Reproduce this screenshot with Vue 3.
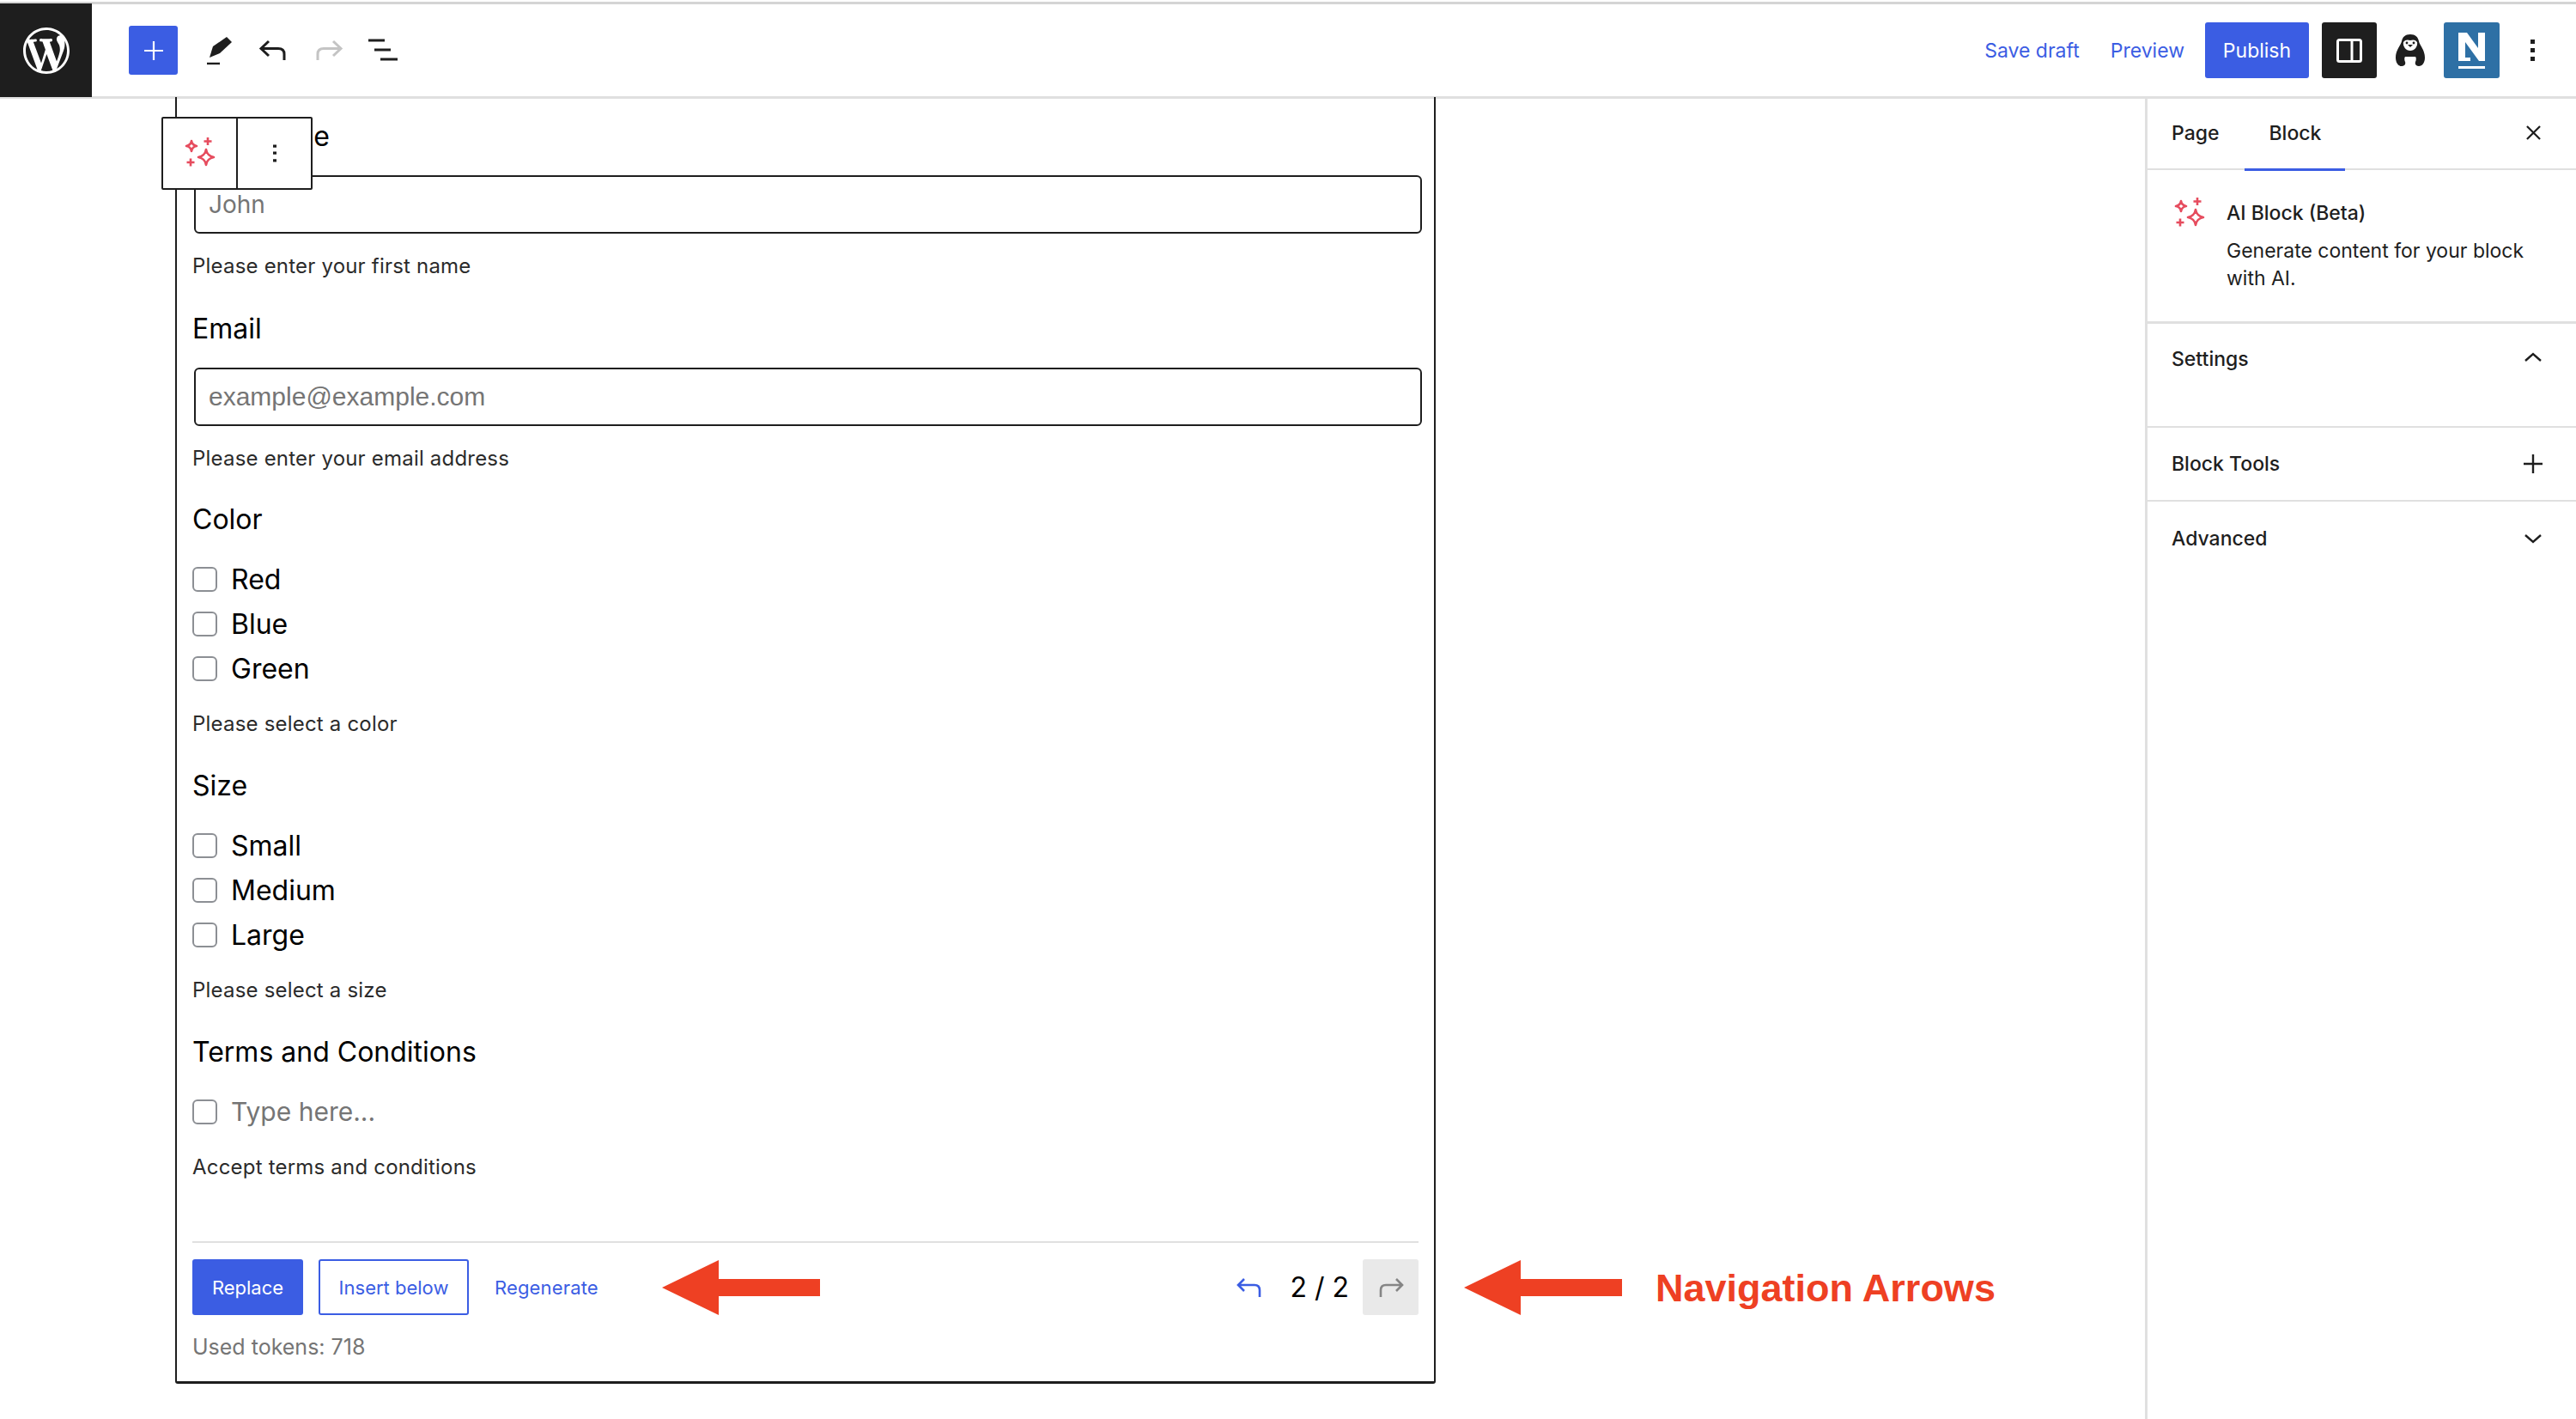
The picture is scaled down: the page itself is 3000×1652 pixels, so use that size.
<template>
  <div class="editor">
    <header class="topbar">
      <div class="wp-logo">
        <svg viewBox="0 0 20 20" width="54" height="54"><path fill="#fff" d="M20 10c0-5.51-4.49-10-10-10C4.48 0 0 4.49 0 10c0 5.52 4.48 10 10 10 5.51 0 10-4.48 10-10zM7.78 15.37L4.37 6.22c.55-.02 1.17-.08 1.17-.08.5-.06.44-1.13-.06-1.11 0 0-1.45.11-2.37.11-.18 0-.37 0-.58-.01C4.12 2.69 6.87 1.11 10 1.11c2.33 0 4.45.87 6.05 2.34-.68-.11-1.65.39-1.65 1.58 0 .74.45 1.36.9 2.1.35.61.55 1.36.55 2.46 0 1.49-1.4 5-1.4 5l-3.03-8.37c.54-.02.82-.17.82-.17.5-.05.44-1.25-.06-1.22 0 0-1.44.12-2.38.12-.87 0-2.33-.12-2.33-.12-.5-.03-.56 1.2-.06 1.22l.92.08 1.26 3.41zM17.41 10c.24-.64.74-1.87.43-4.25.7 1.29 1.05 2.71 1.05 4.25 0 3.29-1.73 6.24-4.4 7.78.97-2.59 1.94-5.2 2.92-7.78zM6.1 18.09C3.12 16.65 1.11 13.53 1.11 10c0-1.3.23-2.48.72-3.59C3.25 10.3 4.67 14.2 6.1 18.09zm4.03-6.63l2.58 6.98c-.86.29-1.76.45-2.71.45-.79 0-1.57-.11-2.29-.33.81-2.38 1.62-4.74 2.42-7.1z"/></svg>
      </div>
      <div class="tools">
        <button class="add-btn">
          <svg viewBox="0 0 24 24" width="24" height="24"><path d="M12 1v22M1 12h22" stroke="#fff" stroke-width="2.2" fill="none"/></svg>
        </button>
        <svg class="tool" viewBox="0 0 36 48" width="36" height="48"><path d="M9 32l4-13L29 8l6 6-14 13z" fill="#1e1e1e"/><path d="M6 39h15" stroke="#1e1e1e" stroke-width="2.4"/></svg>
        <svg class="tool tool-undo" viewBox="0 0 36 36" width="36" height="36"><path d="M12 7L3 15.500l9 8.500M3 15.500h20c5 0 7 2.500 7 6.500v7" fill="none" stroke="#1e1e1e" stroke-width="3"/></svg>
        <svg class="tool tool-redo" viewBox="0 0 36 36" width="36" height="36"><path d="M24 7l9 8.500-9 8.500M33 15.500H13c-5 0-7 2.500-7 6.500v7" fill="none" stroke="#c4c4c4" stroke-width="3"/></svg>
        <svg class="tool tool-list" viewBox="0 0 36 36" width="36" height="36"><path d="M0 6h19M7 17h19M14 28h20" fill="none" stroke="#1e1e1e" stroke-width="3"/></svg>
      </div>
      <div class="actions">
        <a class="link save">Save draft</a>
        <a class="link preview">Preview</a>
        <button class="publish">Publish</button>
        <button class="panel-btn">
          <svg viewBox="0 0 30 28" width="30" height="28"><rect x="1.500" y="1.500" width="27" height="25" rx="2" fill="none" stroke="#fff" stroke-width="3"/><path d="M18 2v24" stroke="#fff" stroke-width="3"/></svg>
        </button>
        <svg class="penguin" viewBox="0 0 34 38" width="34" height="38">
          <path d="M17 0c6 0 9 3 10 8 1 5 7 10 7 19 0 6-3 10-7 10-3 0-5-2-4-5 1-2 1-5 0-6h-12c-1 1-1 4 0 6 1 3-1 5-4 5-4 0-7-4-7-10 0-9 6-14 7-19 1-5 4-8 10-8z" fill="#1e1e1e"/>
          <path d="M9 9c2-3 5-3 8-2 3-1 6-1 8 2 1 5-3 10-8 10-5 0-9-5-8-10z" fill="#fff"/>
          <circle cx="13" cy="10" r="1.400" fill="#1e1e1e"/><circle cx="21" cy="10" r="1.400" fill="#1e1e1e"/><path d="M14 12h6l-3 3z" fill="#1e1e1e"/>
        </svg>
        <div class="n-logo">
          <svg viewBox="0 0 65 65" width="65" height="65"><path d="M17 12h10l13 18V12h8v33h-7L25 23v18h6v4H17z" fill="#fff"/><path d="M17 51h31v3H17z" fill="#fff"/></svg>
        </div>
        <svg class="kebab" viewBox="0 0 5 25" width="5" height="25"><path d="M0 0h5v5H0zM0 10h5v5H0zM0 20h5v5H0z" fill="#1e1e1e"/></svg>
      </div>
    </header>

    <div class="workspace">
      <main class="canvas">
        <div class="block-toolbar">
          <div class="bt-cell">
            <svg viewBox="0 0 38 38" width="38" height="38"><use href="#sparkle" /></svg>
          </div>
          <div class="bt-cell bt-more">
            <svg viewBox="0 0 5 25" width="4" height="25"><path d="M0 0h5v4H0zM0 10h5v4H0zM0 21h5v4H0z" fill="#1e1e1e"/></svg>
          </div>
        </div>

        <section class="form-block">
          <div v-for="field in fields" :key="field.label" class="field">
            <div class="field-label">{{ field.label }}</div>
            <input v-if="field.placeholder" class="text-input" :class="{ 'input-em': field.type === 'email' }" :type="field.type" :placeholder="field.placeholder" />
            <div v-else class="options">
              <label v-for="opt in field.options" :key="opt" class="option" :class="{ muted: field.muted }">
                <input type="checkbox" class="check" />
                <span>{{ opt }}</span>
              </label>
            </div>
            <div class="helper">{{ field.help }}</div>
          </div>

          <div class="result-bar">
            <button class="btn-primary">Replace</button>
            <button class="btn-outline">Insert below</button>
            <a class="btn-link">Regenerate</a>
            <div class="pager">
              <svg viewBox="0 0 30 24" width="30" height="24"><path d="M9 2L2 9l7 7M2 9h19c4 0 6 2 6 6v8" fill="none" stroke="#3b5de3" stroke-width="2.600"/></svg>
              <span class="count">2 / 2</span>
              <button class="next">
                <svg viewBox="0 0 30 24" width="30" height="24"><path d="M21 2l7 7-7 7M28 9H9c-4 0-6 2-6 6v8" fill="none" stroke="#858585" stroke-width="2.600"/></svg>
              </button>
            </div>
          </div>
          <div class="tokens">Used tokens: 718</div>
        </section>

        <svg class="arrow arrow-a" viewBox="0 0 184 64" width="184" height="64"><path d="M0 32L66 0v22h118v20H66v22z" fill="#ee4023"/></svg>
        <svg class="arrow arrow-b" viewBox="0 0 184 64" width="184" height="64"><path d="M0 32L66 0v22h118v20H66v22z" fill="#ee4023"/></svg>
        <div class="arrow-note">Navigation Arrows</div>
      </main>

      <aside class="sidebar">
        <div class="tabs">
          <span class="tab">Page</span>
          <span class="tab tab-on">Block</span>
          <svg class="close" viewBox="0 0 18 18" width="17" height="17"><path d="M1 1l16 16M17 1L1 17" stroke="#1e1e1e" stroke-width="2.400" fill="none"/></svg>
        </div>
        <div class="block-info">
          <svg class="info-icon" viewBox="0 0 38 38" width="38" height="38">
            <defs>
              <g id="sparkle" fill="none" stroke="#e64c5e" stroke-width="2.600" stroke-linejoin="round">
                <path d="M9 4c.5 3 3 5.500 6 6-3 .5-5.500 3-6 6-.5-3-3-5.500-6-6 3-.5 5.500-3 6-6z"/>
                <path d="M26 14c.7 4.700 4.300 8.300 9 9-4.700.7-8.300 4.300-9 9-.7-4.700-4.300-8.300-9-9 4.700-.7 8.300-4.300 9-9z"/>
                <path d="M28 0v9M23.500 4.500h9M8 24.500v9M3.500 29h9"/>
              </g>
            </defs>
            <use href="#sparkle" />
          </svg>
          <div>
            <div class="info-title">AI Block (Beta)</div>
            <p class="info-text">Generate content for your block with AI.</p>
          </div>
        </div>
        <div v-for="panel in panels" :key="panel.title" class="panel" :class="panel.cls">
          <span>{{ panel.title }}</span>
          <svg viewBox="0 0 24 24" width="24" height="24"><path :d="panel.icon" fill="none" stroke="#1e1e1e" stroke-width="2.400"/></svg>
        </div>
      </aside>
    </div>
  </div>
</template>

<script setup>
const fields = [
  { label: 'First Name', type: 'text', placeholder: 'John', help: 'Please enter your first name' },
  { label: 'Email', type: 'email', placeholder: 'example@example.com', help: 'Please enter your email address' },
  { label: 'Color', options: ['Red', 'Blue', 'Green'], help: 'Please select a color' },
  { label: 'Size', options: ['Small', 'Medium', 'Large'], help: 'Please select a size' },
  { label: 'Terms and Conditions', options: ['Type here...'], muted: true, help: 'Accept terms and conditions' }
]

const panels = [
  { title: 'Settings', icon: 'M3 16l9-8 9 8', cls: 'panel-open' },
  { title: 'Block Tools', icon: 'M12 1v22M1 12h22', cls: 'panel-tools' },
  { title: 'Advanced', icon: 'M3 8l9 8 9-8', cls: 'panel-adv' }
]
</script>

<style>
html, body { margin: 0; background: #fff; }
</style>

<style scoped>
.editor {
  width: 3000px;
  height: 1652px;
  overflow: hidden;
  display: flex;
  flex-direction: column;
  font-family: Inter, "Liberation Sans", sans-serif;
  color: #1e1e1e;
  background: #fff;
}
button { font-family: inherit; cursor: pointer; padding: 0; }

.topbar {
  height: 113px;
  box-sizing: border-box;
  margin-top: 2px;
  border-top: 3px solid #d4d4d4;
  border-bottom: 3px solid #e0e0e0;
  display: flex;
  align-items: center;
  flex: none;
  margin-bottom: -2px;
}
.wp-logo {
  width: 107px;
  height: 109px;
  margin-top: -3px;
  margin-bottom: -3px;
  background: #1e1e1e;
  display: flex;
  align-items: center;
  justify-content: center;
  flex: none;
}
.tools { display: flex; align-items: center; margin-left: 43px; }
.add-btn {
  width: 57px;
  height: 57px;
  border: 0;
  border-radius: 3px;
  background: #3b5de3;
  display: flex;
  align-items: center;
  justify-content: center;
}
.tool { margin-left: 28px; }
.tool-undo { margin-left: 30px; }
.tool-redo { margin-left: 27px; }
.tool-list { margin-left: 29px; }
.actions { margin-left: auto; display: flex; align-items: center; font-size: 23px; }
.link { color: #3b5de3; }
.preview { margin-left: 36px; }
.publish {
  width: 121px;
  height: 65px;
  margin-left: 24px;
  border: 0;
  border-radius: 3px;
  background: #3b5de3;
  color: #fff;
  font-size: 23px;
}
.panel-btn {
  width: 64px;
  height: 65px;
  margin-left: 15px;
  border: 0;
  border-radius: 3px;
  background: #1e1e1e;
  display: flex;
  align-items: center;
  justify-content: center;
}
.penguin { margin-left: 22px; }
.n-logo {
  width: 65px;
  height: 65px;
  margin-left: 22px;
  border-radius: 3px;
  background: #2e70a5;
  overflow: hidden;
  display: flex;
  align-items: center;
  justify-content: center;
}
.kebab { margin-left: 36px; margin-right: 48px; }

.workspace { flex: 1; display: flex; min-height: 0; }
.canvas { position: relative; flex: 1; padding-left: 204px; min-width: 0; }

.block-toolbar {
  position: absolute;
  left: 188px;
  top: 23px;
  z-index: 2;
  display: flex;
  height: 85px;
  box-sizing: border-box;
  border: 2px solid #1e1e1e;
  border-radius: 2px;
  background: #fff;
}
.bt-cell {
  width: 85px;
  display: flex;
  align-items: center;
  justify-content: center;
}
.bt-more { border-left: 2px solid #1e1e1e; }

.form-block {
  width: 1468px;
  height: 1498px;
  box-sizing: border-box;
  padding: 26px 18px 0 18px;
  border: solid #1e1e1e;
  border-width: 0 2px 3px 2px;
  border-radius: 0 0 3px 3px;
  font-size: 24px;
}
.field { margin-bottom: 37px; }
.field:nth-child(2) { margin-bottom: 35px; }
.field:nth-child(3), .field:nth-child(4) { margin-bottom: 36px; }
.field-label {
  font-size: 32px;
  line-height: 40px;
  color: #000;
}
/* toolbar covers all of this label but its last letter */
.field:first-child .field-label { word-spacing: -4px; }
.text-input {
  display: block;
  width: 1430px;
  height: 68px;
  box-sizing: border-box;
  margin: 25px 0 22px 2px;
  padding: 0 15px;
  border: 2px solid #1e1e1e;
  border-radius: 6px;
  font-family: Inter, sans-serif;
  font-size: 28px;
  outline: none;
  background: #fff;
}
.text-input::placeholder { color: #757575; opacity: 1; }
.input-em { font-family: "Liberation Sans", Arial, sans-serif; font-size: 30px; }
.options { margin: 23px 0 23px; }
.option {
  display: flex;
  align-items: center;
  height: 52px;
  font-size: 32px;
  color: #000;
}
.option.muted { color: #757575; font-size: 30px; }
.check {
  appearance: none;
  width: 29px;
  height: 29px;
  margin: 0 16px 0 0;
  border: 2px solid #8c8f94;
  border-radius: 6px;
  background: #fff;
  flex: none;
}
.helper {
  font-size: 24px;
  line-height: 32px;
  letter-spacing: 0.2px;
  color: #2b2b2b;
}
.result-bar {
  display: flex;
  align-items: center;
  margin-top: 70px;
  padding-top: 19px;
  border-top: 2px solid #e0e0e0;
  font-size: 22px;
}
.btn-primary {
  width: 129px;
  height: 65px;
  border: 0;
  border-radius: 3px;
  background: #3b5de3;
  color: #fff;
  font-size: 22px;
}
.btn-outline {
  width: 175px;
  height: 65px;
  margin-left: 18px;
  border: 2px solid #3b5de3;
  border-radius: 3px;
  background: #fff;
  color: #3b5de3;
  font-size: 22px;
}
.btn-link { margin-left: 30px; color: #3b5de3; letter-spacing: 0.15px; }
.pager { margin-left: auto; display: flex; align-items: center; }
.count { margin: 0 16px 0 32px; font-size: 32px; color: #000; }
.next {
  width: 65px;
  height: 65px;
  border: 0;
  border-radius: 3px;
  background: #e9e9e9;
  display: flex;
  align-items: center;
  justify-content: center;
}
.tokens { margin-top: 21px; font-size: 25px; line-height: 32px; color: #757575; }

.arrow { position: absolute; top: 1354px; }
.arrow-a { left: 771px; }
.arrow-b { left: 1705px; }
.arrow-note {
  position: absolute;
  left: 1928px;
  top: 1357px;
  font-family: "Liberation Sans", Arial, sans-serif;
  font-weight: 700;
  font-size: 45px;
  line-height: 60px;
  color: #ee4023;
}

.sidebar {
  width: 502px;
  flex: none;
  box-sizing: border-box;
  border-left: 3px solid #e0e0e0;
  font-size: 22px;
}
.tabs {
  height: 83px;
  display: flex;
  align-items: center;
  padding-left: 28px;
  border-bottom: 2px solid #e0e0e0;
  position: relative;
  font-weight: 500;
  font-size: 23px;
}
.tab-on { margin-left: 58px; position: relative; }
.tab-on::after {
  content: "";
  position: absolute;
  left: -28px;
  right: -28px;
  bottom: -30px;
  height: 3px;
  background: #3b5de3;
}
.close { margin-left: auto; margin-right: 41px; }
.block-info {
  display: flex;
  height: 179px;
  box-sizing: border-box;
  padding: 32px 28px 0 30px;
  border-bottom: 3px solid #e0e0e0;
}
.info-icon { flex: none; margin-right: 24px; }
.info-title { margin-top: 2px; font-size: 23px; line-height: 32px; font-weight: 500; }
.info-text { margin: 12px 0 0; font-size: 23px; line-height: 32px; }
.panel {
  display: flex;
  align-items: center;
  justify-content: space-between;
  box-sizing: border-box;
  padding: 0 38px 0 28px;
  font-weight: 500;
  font-size: 23px;
  border-bottom: 2px solid #e0e0e0;
}
.panel-open { height: 121px; align-items: flex-start; padding-top: 27px; }
.panel-tools { height: 86px; }
.panel-adv { height: 86px; border-bottom: 0; }
</style>
